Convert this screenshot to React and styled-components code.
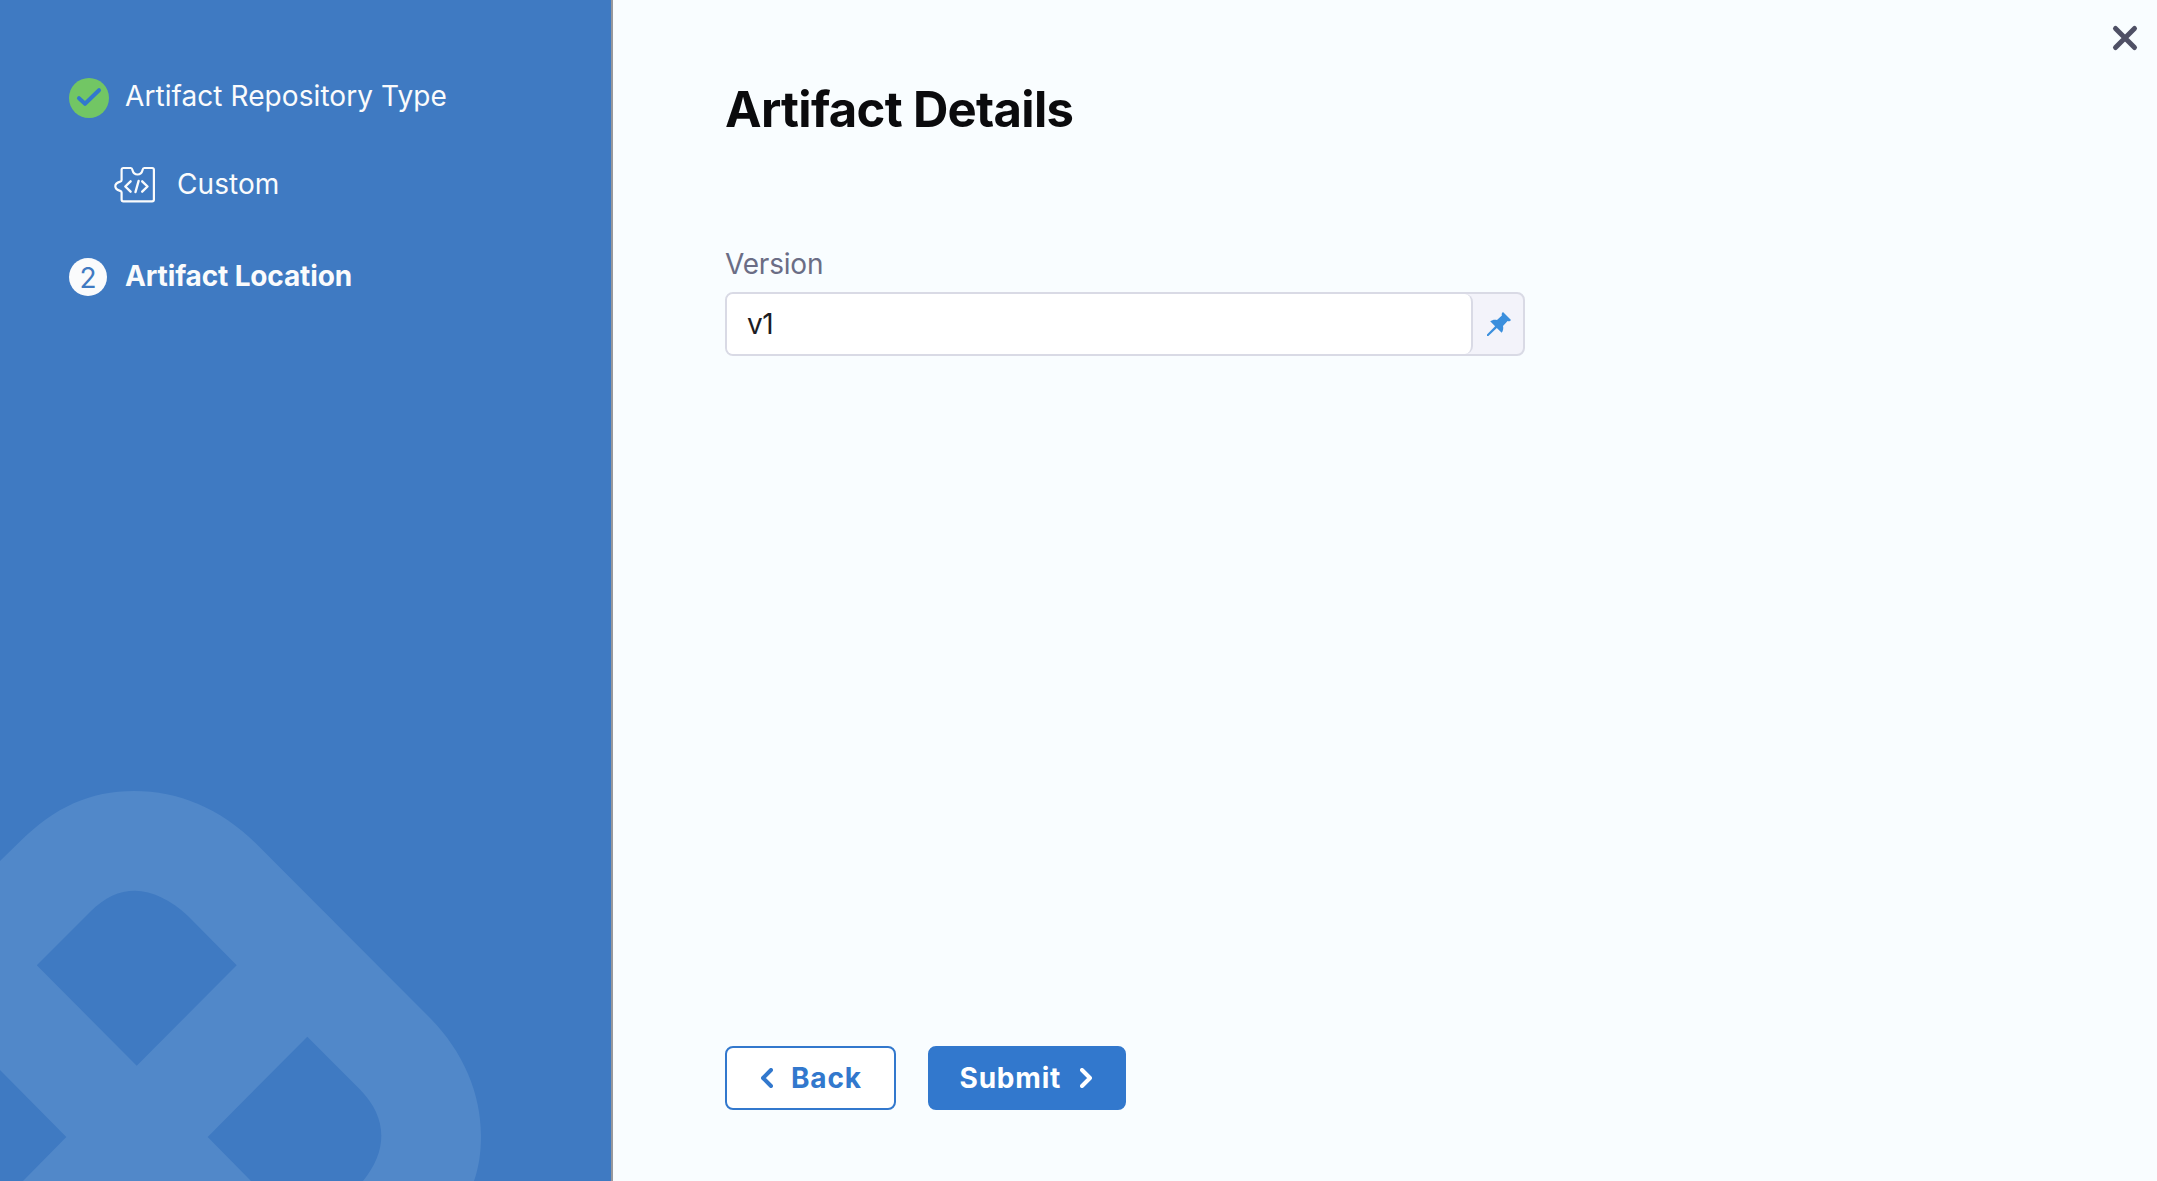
import React from "react";
import styled, { createGlobalStyle } from "styled-components";

const GlobalStyle = createGlobalStyle`
  * { box-sizing: border-box; }
  body { margin: 0; background: #f9fdff; font-family: Inter, "Liberation Sans", sans-serif; }
  button, input { font-family: inherit; }
`;

const Dialog = styled.div`
  position: relative;
  display: flex;
  width: 100%;
  height: 100vh;
  overflow: hidden;
  background: #f9fdff;
`;

const Sidebar = styled.aside`
  position: relative;
  width: 613px;
  flex: none;
  padding: 78px 0 0 69px;
  background: #3f7ac2;
  border-right: 2px solid #98989c;
`;

const Watermark = styled.svg`
  position: absolute;
  left: 0;
  bottom: 0;
  width: 500px;
  height: 400px;
  fill: #5188c9;
`;

const StepList = styled.ol`
  position: relative;
  margin: 0;
  padding: 0;
  list-style: none;
`;

const Step = styled.li`
  display: flex;
  align-items: center;
  height: ${(p) => p.$height}px;
  margin-bottom: ${(p) => p.$after || 0}px;
  padding-left: ${(p) => p.$indent || 0}px;
`;

const StepIcon = styled.span`
  display: flex;
  width: ${(p) => p.$width}px;
  flex: none;
`;

const StepText = styled.span`
  padding-bottom: ${(p) => p.$lift || 2}px;
  color: #fafbfc;
  font-size: 28px;
  line-height: 34px;
  font-weight: ${(p) => (p.$current ? 700 : 400)};
  letter-spacing: ${(p) => (p.$current ? -0.14 : 0.07)}px;
  white-space: nowrap;
`;

const StepNumber = styled.span`
  display: flex;
  align-items: center;
  justify-content: center;
  width: 38px;
  height: 38px;
  padding-top: 2px;
  border-radius: 50%;
  background: #fafbfc;
  color: #3f7ac2;
  font-size: 28px;
  line-height: 36px;
`;

const Content = styled.main`
  display: flex;
  flex: 1;
  flex-direction: column;
  align-items: flex-start;
  padding: 80px 0 71px 112px;
`;

const Title = styled.h1`
  margin: 0;
  color: #0b0b0d;
  font-size: 49px;
  line-height: 60px;
  font-weight: 700;
  letter-spacing: -0.69px;
`;

const Field = styled.label`
  display: flex;
  flex-direction: column;
  width: 800px;
  margin-top: 107px;
`;

const FieldLabel = styled.span`
  color: #6b6d85;
  font-size: 28px;
  line-height: 34px;
  letter-spacing: -0.2px;
`;

const InputGroup = styled.div`
  display: flex;
  height: 64px;
  margin-top: 11px;
  border: 2px solid #d9dae5;
  border-radius: 8px;
  background: #f3f3fa;
  overflow: hidden;
`;

const TextInput = styled.input`
  width: 746px;
  padding: 0 20px;
  border: 0;
  border-right: 2px solid #d9dae5;
  border-radius: 0 8px 8px 0;
  outline: 0;
  background: #fff;
  color: #1c1c24;
  font-size: 28px;
  letter-spacing: -0.4px;
`;

const PinButton = styled.button`
  display: flex;
  flex: 1;
  align-items: center;
  justify-content: center;
  padding: 0 0 0 2px;
  border: 0;
  background: transparent;
`;

const Actions = styled.footer`
  display: flex;
  gap: 32px;
  margin-top: auto;
`;

const ActionButton = styled.button`
  display: flex;
  align-items: center;
  width: ${(p) => p.$width}px;
  height: 64px;
  padding: 0 0 0 ${(p) => p.$inset}px;
  gap: ${(p) => p.$gap}px;
  border: 2px solid #3278cd;
  border-radius: 8px;
  background: ${(p) => (p.$primary ? "#3278cd" : "#fff")};
  color: ${(p) => (p.$primary ? "#fff" : "#3278cd")};
  font-size: 28px;
  line-height: 34px;
  font-weight: 700;
  letter-spacing: 0.8px;
`;

const CloseButton = styled.button`
  position: absolute;
  top: 24px;
  right: 18px;
  display: flex;
  padding: 0;
  border: 0;
  background: transparent;
`;

function CheckIcon() {
  return (
    <svg width="40" height="40" viewBox="0 0 40 40">
      <circle cx="20" cy="20" r="20" fill="#72c664" />
      <path d="M10 20.2l6 5.6L30 12.2" fill="none" stroke="#3278cd" strokeWidth="4" strokeLinecap="round" strokeLinejoin="round" />
    </svg>
  );
}

function CustomIcon() {
  return (
    <svg width="42" height="38" viewBox="0 0 42 38" fill="none" stroke="#fafbfc" strokeWidth="2.2" strokeLinecap="round" strokeLinejoin="round">
      <path d="M9.4 2h7.400c1.200 0 1.400 1 1.700 2.200.7 2.800 2.300 4.300 5 4.300s4.300-1.500 5-4.300C28.800 3 29 2 30.200 2h7.900c1.100 0 1.800.7 1.800 1.800v29.800c0 1.100-.7 1.800-1.800 1.800H9.400c-1.100 0-1.800-.7-1.800-1.800v-7c0-1-.5-1.400-1.500-1.700C3.500 24.100 1.300 23 1.300 20.300s2.200-4 4.800-4.700c1-.3 1.500-.7 1.500-1.700V3.800C7.600 2.700 8.300 2 9.400 2z" />
      <path d="M16.600 15.300l-5.300 5.200 5.300 5.200M24.600 15l-3.100 11M28.200 15.300l5.300 5.200-5.300 5.200" strokeWidth="2.400" />
    </svg>
  );
}

function PinIcon() {
  return (
    <svg width="26" height="26" viewBox="0 0 26 26" fill="#3b8fdd">
      <path d="M17 1l8 8-1 1c-.8.400-1.600.400-2.400.100l-4.600 4.900c.6 2.500.2 4.800-1.300 6.800l-4.900-4.900L2.400 25H1v-1.400l8.100-8.400-4.900-4.900c2-1.500 4.300-1.900 6.800-1.300l4.900-4.600c-.3-.8-.3-1.600.1-2.400z" />
    </svg>
  );
}

function Chevron({ right }) {
  return (
    <svg width="12" height="20" viewBox="0 0 12 20" fill="none" stroke="currentColor" strokeWidth="4" strokeLinecap="round" strokeLinejoin="round">
      <path d={right ? "M2 2l8 8-8 8" : "M10 2l-8 8 8 8"} />
    </svg>
  );
}

export default function App() {
  return (
    <Dialog>
      <GlobalStyle />
      <Sidebar>
        <Watermark viewBox="0 0 500 400">
          <path
            fillRule="evenodd"
            d="M0 80L20 60.500C55 26 90 10 134 10C180 10 222 28 259 65.500L431 238C463 271 481 312 481 355C481 371 479 386 474 400H251L207.700 356L307.300 255.700L360 308.500C374 323 381.300 338 381.300 355C381.300 370 375 385 363 400H23L66.300 356L0 289ZM36.800 184.300L136.700 284.700L236.700 184.300L188 135C171 119 152 109.700 135 109.700C119 109.700 105 116 90 131Z"
          />
        </Watermark>
        <StepList>
          <Step $height={40} $after={48}>
            <StepIcon $width={56}><CheckIcon /></StepIcon>
            <StepText $lift={4}>Artifact Repository Type</StepText>
          </Step>
          <Step $height={38} $after={54} $indent={45}>
            <StepIcon $width={63}><CustomIcon /></StepIcon>
            <StepText>Custom</StepText>
          </Step>
          <Step $height={38}>
            <StepIcon $width={56}><StepNumber>2</StepNumber></StepIcon>
            <StepText $current>Artifact Location</StepText>
          </Step>
        </StepList>
      </Sidebar>
      <Content>
        <Title>Artifact Details</Title>
        <Field>
          <FieldLabel>Version</FieldLabel>
          <InputGroup>
            <TextInput defaultValue="v1" />
            <PinButton type="button" aria-label="Fixed value"><PinIcon /></PinButton>
          </InputGroup>
        </Field>
        <Actions>
          <ActionButton type="button" $width={171} $inset={34} $gap={18}>
            <Chevron />
            Back
          </ActionButton>
          <ActionButton type="button" $primary $width={198} $inset={29.5} $gap={19}>
            Submit
            <Chevron right />
          </ActionButton>
        </Actions>
      </Content>
      <CloseButton type="button" aria-label="Close">
        <svg width="28" height="28" viewBox="0 0 28 28" fill="none" stroke="#4f5065" strokeWidth="5" strokeLinecap="round">
          <path d="M4.500 4.500l19 19M23.500 4.500l-19 19" />
        </svg>
      </CloseButton>
    </Dialog>
  );
}
